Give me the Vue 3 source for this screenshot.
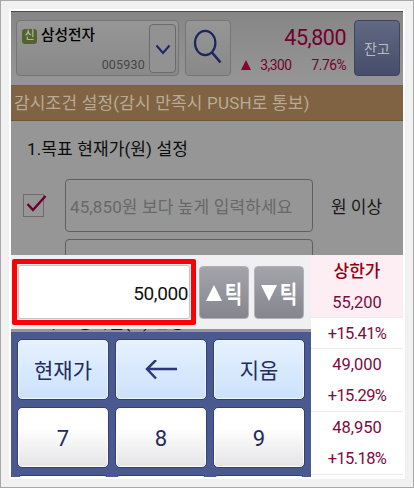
<template>
  <div class="frame">
    <div class="screen">
      <header class="head">
        <div class="stock">
          <div class="info">
            <div class="nameRow">
              <span class="badge">신</span>
              <span class="name">삼성전자</span>
            </div>
            <div class="code">005930</div>
          </div>
          <button class="drop" type="button">
            <svg width="16" height="12" viewBox="0 0 16 12">
              <path d="M1.5 2.5 L8 10 L14.5 2.5" fill="none" stroke="#1c2560" stroke-width="2" />
            </svg>
          </button>
        </div>

        <button class="search" type="button">
          <svg width="34" height="38" viewBox="0 0 34 38">
            <ellipse cx="14.2" cy="14" rx="10.2" ry="12.2" fill="none" stroke="#1c2560" stroke-width="2.2" />
            <path d="M21 23.5 L29.5 33.5" stroke="#1c2560" stroke-width="2.6" />
          </svg>
        </button>

        <div class="quote">
          <div class="now">45,800</div>
          <div class="diff">
            <i class="up"></i>
            <span class="amount">3,300</span>
            <span>7.76%</span>
          </div>
        </div>

        <button class="balance" type="button">잔고</button>
      </header>

      <div class="bar">감시조건 설정(감시 만족시 PUSH로 통보)</div>

      <section class="conds">
        <div class="condTitle">1.목표 현재가(원) 설정</div>
        <div class="cond">
          <span class="chk">
            <svg width="24" height="22" viewBox="0 0 24 22">
              <path d="M3.5 9 L9 15 L21.5 1" fill="none" stroke="#6b0030" stroke-width="2.5" />
            </svg>
          </span>
          <div class="field"><span>45,850원 보다 높게 입력하세요</span></div>
          <span class="unit">원 이상</span>
        </div>
        <div class="cond next">
          <span class="chk low"></span>
          <div class="field"></div>
        </div>
      </section>

      <div class="bottom">
        <div class="left">
          <div class="entry">
            <div class="mark"><div class="value">50,000</div></div>
            <button class="tick" type="button">
              <svg width="16" height="18" viewBox="0 0 16 18"><path d="M8 1 L16 17 H0 Z" fill="#fff" /></svg>
              <span>틱</span>
            </button>
            <button class="tick" type="button">
              <svg width="16" height="18" viewBox="0 0 16 18"><path d="M0 1 H16 L8 17 Z" fill="#fff" /></svg>
              <span>틱</span>
            </button>
          </div>

          <div class="peek"><span>2.목표 등락률(%) 설정</span></div>

          <div class="pad">
            <button v-for="k in keys" :key="k.id" class="key" :class="{ fn: k.fn }" type="button">
              <svg v-if="k.id === 'back'" width="34" height="20" viewBox="0 0 34 20">
                <path d="M33 9 H3 M12 0 L3 9 L12 18.5" fill="none" stroke="#2c3978" stroke-width="2.5" />
              </svg>
              <span v-else>{{ k.label }}</span>
            </button>
          </div>
        </div>

        <div class="prices">
          <div class="cell limit">
            <b>상한가</b>
            <span>55,200</span>
          </div>
          <div class="cell rate">+15.41%</div>
          <div v-for="p in prices" :key="p.price" class="cell pair">
            <span>{{ p.price }}</span>
            <span class="pct">{{ p.rate }}</span>
          </div>
        </div>
      </div>
    </div>
  </div>
</template>

<script setup>
const keys = [
  { id: "now", label: "현재가", fn: true },
  { id: "back", label: "", fn: true },
  { id: "clear", label: "지움", fn: true },
  { id: "7", label: "7" },
  { id: "8", label: "8" },
  { id: "9", label: "9" },
  { id: "4", label: "" },
  { id: "5", label: "" },
  { id: "6", label: "" },
];

const prices = [
  { price: "49,000", rate: "+15.29%" },
  { price: "48,950", rate: "+15.18%" },
];
</script>

<style>
body { background: #f1f1f1; overflow: hidden; }
</style>

<style scoped>
* { box-sizing: border-box; }

.frame {
  width: 414px;
  height: 488px;
  padding: 8px;
  border: 1px solid #a8a8a8;
  background: #f1f1f1;
  font-family: Roboto, "Noto Sans CJK KR", sans-serif;
}

.screen {
  width: 396px;
  height: 470px;
  padding: 2px;
  background: #fff;
  display: flex;
  flex-direction: column;
  overflow: hidden;
}

button {
  padding: 0;
  border: none;
  font-family: inherit;
}

svg { display: block; flex: none; }

.head {
  flex: none;
  display: flex;
  height: 74px;
  padding: 8px 3px 0 5px;
  border-top: 1px solid #4c4c4c;
  background: linear-gradient(#868686, #969696);
}

.stock {
  display: flex;
  width: 163px;
  height: 56px;
  padding: 3px 2px 3px 4px;
  border: 1px solid #757575;
  border-radius: 4px;
  background: linear-gradient(#969696, #898989);
}

.info {
  flex: 1;
  display: flex;
  flex-direction: column;
  justify-content: space-between;
  padding: 0 4px 0 1px;
}

.nameRow { display: flex; align-items: center; height: 22px; }

.badge {
  width: 15px;
  height: 15px;
  margin: 3px 4px 0 0;
  border-radius: 3px;
  background: #53632f;
  color: #c3c8b5;
  font-size: 11px;
  line-height: 14px;
  text-align: center;
}

.name {
  color: #000;
  font-size: 14.7px;
  font-weight: 500;
  line-height: 20px;
}

.code {
  color: #454545;
  font-size: 12.5px;
  line-height: 14px;
  text-align: right;
  letter-spacing: .2px;
}

.drop {
  display: flex;
  align-items: center;
  justify-content: center;
  width: 27px;
  height: 49px;
  border: 1px solid #6b6b6b;
  border-radius: 4px;
  background: #929292;
}

.search {
  display: flex;
  align-items: center;
  justify-content: center;
  width: 46px;
  height: 56px;
  margin-left: 6px;
  border: 1px solid #757575;
  border-radius: 4px;
  background: linear-gradient(#969696, #898989);
}

.quote {
  flex: 1;
  padding: 4px 8px 0 0;
  color: #73002f;
  text-align: right;
}

.now {
  font-size: 21.5px;
  line-height: 27px;
  letter-spacing: -.5px;
}

.diff {
  display: flex;
  align-items: center;
  justify-content: flex-end;
  height: 27px;
  font-size: 13.8px;
  letter-spacing: -.5px;
}

.up {
  margin-right: 9px;
  border: 5px solid transparent;
  border-top: 0;
  border-bottom: 10px solid #8a0032;
}

.amount { margin-right: 20px; }

.balance {
  width: 46px;
  height: 56px;
  border: 1px solid #3e4560;
  border-radius: 4px;
  background: linear-gradient(#606983, #454d6a);
  color: #b9bbc3;
  font-size: 14px;
}

.bar {
  flex: none;
  height: 36px;
  padding-left: 3px;
  border-top: 1px solid #77603c;
  border-bottom: 1px solid #6c5434;
  background: #7f6342;
  color: #b9aa97;
  font-size: 17px;
  line-height: 34px;
  letter-spacing: .17px;
  white-space: nowrap;
}

.conds {
  flex: none;
  height: 134px;
  background: #969696;
  overflow: hidden;
}

.condTitle {
  height: 58px;
  padding-left: 16px;
  color: #0c0c0c;
  font-size: 17px;
  line-height: 56px;
  letter-spacing: .12px;
}

.cond {
  display: flex;
  align-items: center;
  height: 53px;
  padding-left: 12px;
}

.next { margin-top: 7px; }

.chk {
  width: 21px;
  height: 23px;
  margin-right: 21px;
  border: 1px solid #6c6c6c;
}

.low { margin-top: 2px; }

.field {
  display: flex;
  align-items: center;
  width: 248px;
  height: 53px;
  padding-left: 4px;
  border: 1px solid #5f5f5f;
  border-radius: 4px;
  color: #686868;
  font-size: 17px;
  letter-spacing: .12px;
  white-space: nowrap;
}

.unit {
  margin-left: 18px;
  color: #161616;
  font-size: 17px;
  white-space: nowrap;
}

.bottom { flex: none; display: flex; height: 222px; }

.left { width: 300px; }

.entry {
  display: flex;
  align-items: flex-start;
  height: 74px;
  padding: 4px 0 0 1px;
  background: #f0eff1;
}

.mark {
  width: 184px;
  height: 66px;
  margin-right: 3px;
  padding: 1px;
  border: 5px solid #fb0007;
  border-radius: 2px;
  background: #ececec;
}

.value {
  height: 54px;
  padding-right: 1px;
  border: 1px solid #c5c5c5;
  border-radius: 3px;
  background: #fff;
  color: #111;
  font-size: 19px;
  line-height: 55px;
  letter-spacing: -.4px;
  text-align: right;
}

.tick {
  display: flex;
  align-items: center;
  justify-content: center;
  gap: 3px;
  width: 50px;
  height: 53px;
  margin: 7px 5px 0 0;
  border: 1px solid #b1b0b5;
  border-radius: 4px;
  background: linear-gradient(#a4a4ab, #85858e);
  color: #fff;
  font-size: 19px;
  font-weight: 700;
}

.tick span { transform: scaleY(1.28); }

.peek {
  height: 3px;
  padding-left: 16px;
  background: #969696;
  color: #111;
  font-size: 17px;
  line-height: 23px;
  letter-spacing: .12px;
  overflow: hidden;
}

.peek span { display: block; margin-top: -18px; }

.pad {
  display: grid;
  grid-template-columns: repeat(3, 92px);
  grid-auto-rows: 61px;
  gap: 7px 6px;
  height: 145px;
  padding: 7px 0 0 6px;
  background: #4a5990;
  overflow: hidden;
}

.key {
  display: flex;
  align-items: center;
  justify-content: center;
  border: 1px solid #333f75;
  border-radius: 5px;
  background: linear-gradient(#fff 35%, #e4e3e5);
  box-shadow: inset 0 0 0 1px #fff;
  color: #242b5b;
  font-size: 22px;
}

.key span { margin-top: 2px; }

.fn {
  background: linear-gradient(#e6f1ff, #cce2fb);
  box-shadow: inset 0 0 0 1px #edf6ff;
  font-size: 21px;
}

.fn span { margin-top: -2px; }

.prices {
  width: 92px;
  background: #fff;
  color: #7b0b40;
  font-size: 16.5px;
  text-align: center;
}

.cell {
  display: flex;
  flex-direction: column;
  align-items: center;
  border-bottom: 1px solid #ebebeb;
  line-height: 31px;
}

.limit { height: 63px; background: #fdeef4; }
.limit b { color: #900012; font-size: 17px; font-weight: 500; line-height: 32px; }
.rate { height: 31px; letter-spacing: -.6px; }
.pair { height: 63px; }
.pct { letter-spacing: -.6px; }
</style>
